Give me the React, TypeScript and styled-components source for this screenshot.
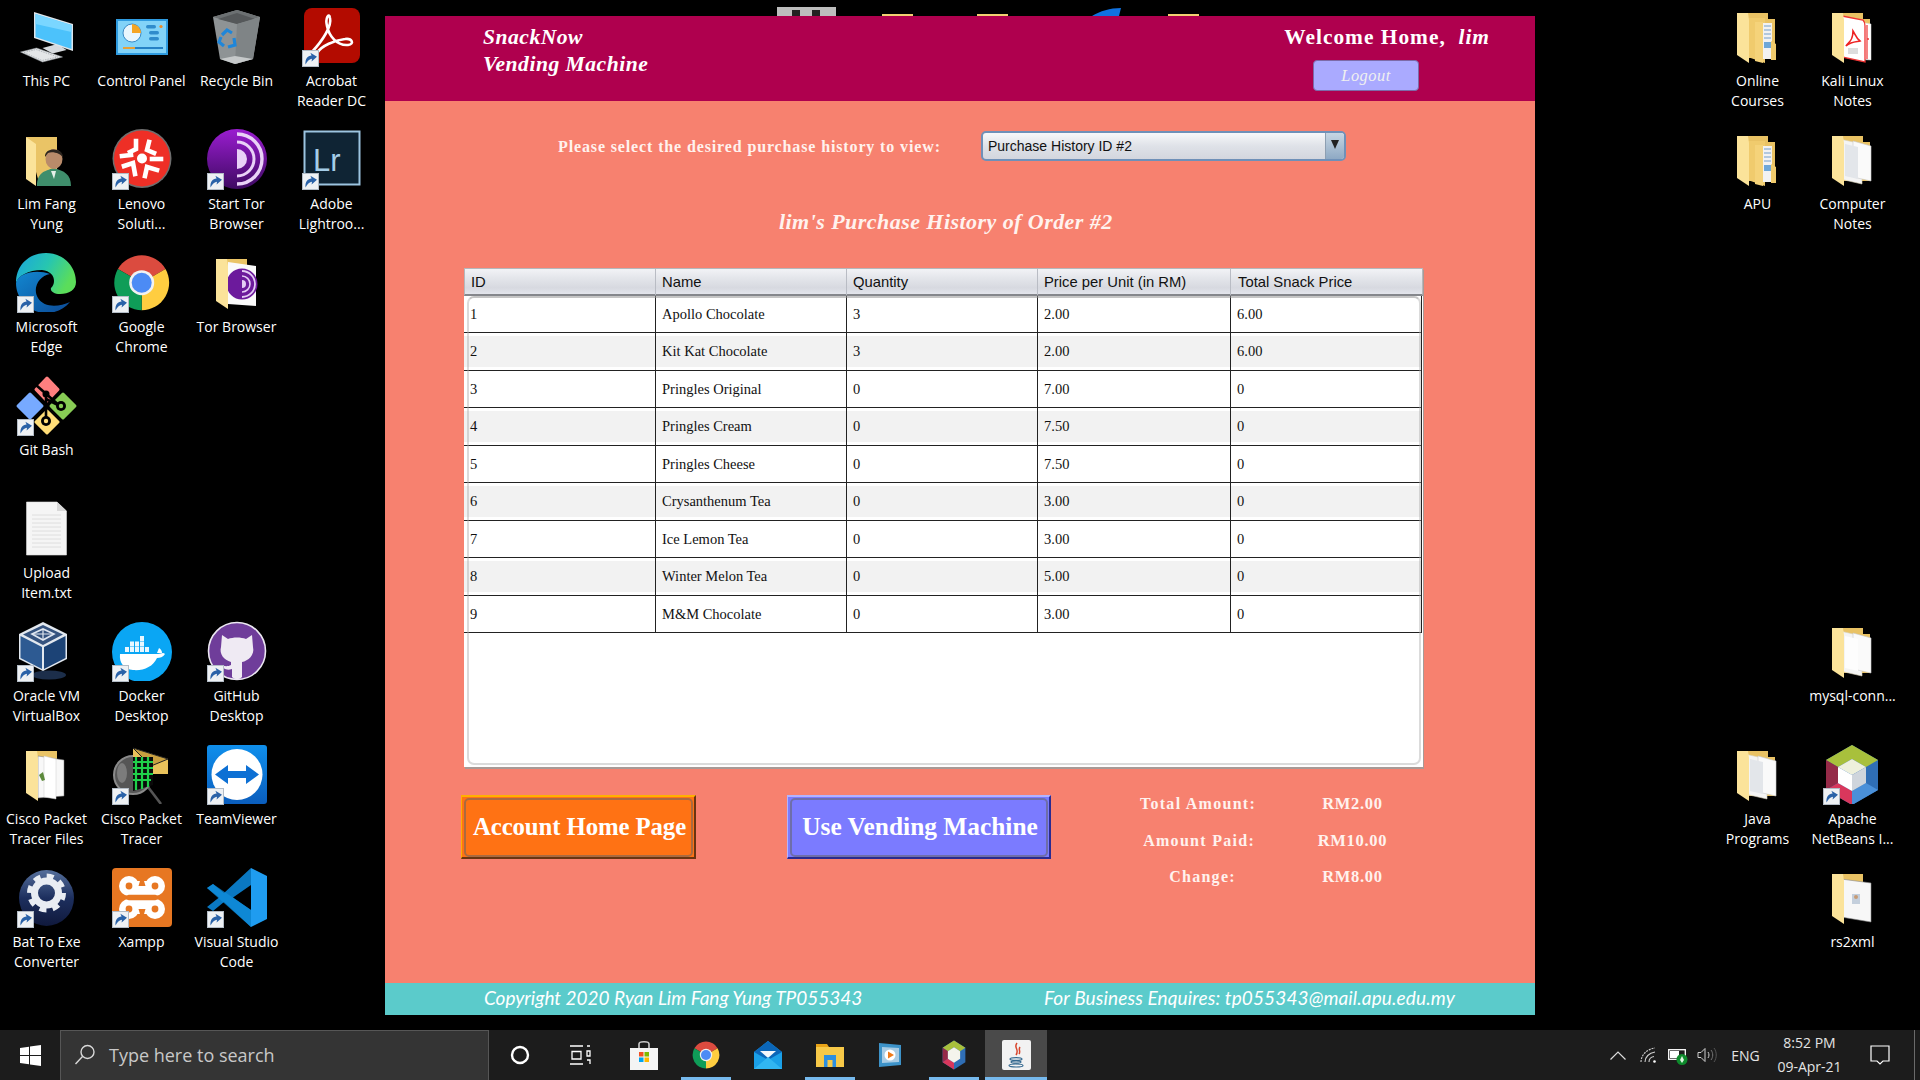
import React from "react";
import styled, { createGlobalStyle } from "styled-components";

const GlobalStyle = createGlobalStyle`
  html, body { margin: 0; padding: 0; background: #000; overflow: hidden; }
  #root { width: 1920px; height: 1080px; }
`;

const SERIF = `"Liberation Serif", serif`;
const ARIAL = `"Liberation Sans", sans-serif`;
const UI = `"Open Sans", sans-serif`;

const Screen = styled.div`
  width: 1920px; height: 1080px; display: flex; flex-direction: column; background: #000;
`;
const Desktop = styled.div`
  position: relative; height: 1030px; display: flex; align-items: flex-start;
`;
const IconGrid = styled.div<{ $cols: number; $pad: number; $w: number; $shift?: number }>`
  width: ${p => p.$w}px; flex: none; box-sizing: border-box; padding-left: ${p => p.$pad}px;
  margin-left: ${p => p.$shift ?? 0}px;
  display: grid; grid-template-columns: repeat(${p => p.$cols}, 95px); grid-template-rows: repeat(8, 123px);
`;
const IconCell = styled.div<{ $col: number; $row: number }>`
  grid-column: ${p => p.$col}; grid-row: ${p => p.$row};
  display: flex; flex-direction: column; align-items: center; padding-top: 6px;
`;
const IconArt = styled.div`
  position: relative; width: 64px; height: 60px; margin-right: 2px; svg { display: block; }
`;
const ShortcutBadge = styled.div`
  position: absolute; left: 3px; top: 44px; width: 17px; height: 17px;
  svg { display: block; }
`;
const IconLabel = styled.div`
  margin-top: 4.5px; width: 95px; text-align: center; white-space: pre-line;
  font: 14px/20px ${UI}; color: #fff;
`;
const Peek = styled.div<{ $x: number; $y: number; $w: number; $c: string }>`
  position: absolute; left: ${p => p.$x}px; top: ${p => p.$y}px; width: ${p => p.$w}px; height: ${p => 16 - p.$y}px;
  background: ${p => p.$c};
`;
const PeekArt = styled.svg`
  position: absolute; left: 1092px; top: 8px;
`;

const Win = styled.div`
  position: relative; margin: 16px 0 0 1px; width: 1150px; height: 999px; flex: none; display: flex; flex-direction: column;
  background: #f7816f;
`;
const WinHeader = styled.header`
  height: 85px; flex: none; background: #af004e; display: flex; justify-content: space-between; color: #fff;
`;
const Brand = styled.div`
  padding: 8px 0 0 98px; font: italic bold 21.6px/26.5px ${SERIF}; letter-spacing: .5px;
`;
const Account = styled.div`
  display: flex; flex-direction: column; align-items: flex-end; padding: 8px 45px 0 0;
`;
const Welcome = styled.div`
  font: bold 21.4px/26px ${SERIF}; letter-spacing: 1px; white-space: pre;
  em { font-style: italic; }
`;
const Logout = styled.div`
  margin: 10px 71px 0 0; width: 106px; height: 31px; box-sizing: border-box; border-radius: 4px;
  background: #aaaaff; border: 1px solid #7d6aa8; display: flex; align-items: center; justify-content: center;
  font: italic 16.4px ${SERIF}; color: #f0f0f0; letter-spacing: .5px;
`;
const WinBody = styled.main`
  flex: 1; display: flex; flex-direction: column; align-items: flex-start; padding-top: 30px;
`;
const SelectRow = styled.div`
  display: flex; align-items: center; padding-left: 173px;
`;
const SelectLabel = styled.div`
  width: 423px; padding-top: 2px; font: bold 16px ${SERIF}; color: #fff2ee; letter-spacing: .87px; white-space: nowrap;
`;
const Combo = styled.div`
  width: 365px; height: 30px; box-sizing: border-box; border: 2px solid #6f90b8; border-radius: 5px;
  display: flex; overflow: hidden; background: linear-gradient(#f7f8fa, #dfe2e8 50%, #d3d6de);
  font: 14px ${ARIAL}; color: #111;
`;
const ComboText = styled.div`
  flex: 1; line-height: 26px; padding-left: 5px;
`;
const ComboArrow = styled.div`
  width: 19px; border-left: 1px solid #8d9fb2; background: linear-gradient(#c7d6e3, #a5bbd0 60%, #8ea9c4);
  display: flex; align-items: center; justify-content: center; padding-bottom: 4px; box-sizing: border-box;
  &::before { content: ""; border-left: 4px solid transparent; border-right: 4px solid transparent; border-top: 9px solid #222; }
`;
const Title = styled.h1`
  margin: 46px 0 0 394px; font: italic bold 22px/30px ${SERIF}; color: #fff2ee; letter-spacing: .45px;
`;
const Table = styled.div`
  position: relative; margin: 31px 0 0 79px; width: 959px; height: 499px; background: #fff;
  box-shadow: 1px 2px 0 #a89a96; border-top: 1px solid #b5b7bb; box-sizing: border-box;
`;
const HeadRow = styled.div`
  display: grid; grid-template-columns: 190px 191px 191px 193px 192px; height: 26.5px; box-sizing: border-box;
  background: linear-gradient(#f2f3f6, #e4e6eb 35%, #d7d9e0 75%, #e3e5ec);
  border-bottom: 2px solid #85878c; border-left: 1px solid #b5b7bb; border-right: 1px solid #b5b7bb;
`;
const HeadCell = styled.div`
  font: 14.8px/26px ${ARIAL}; color: #111; padding-left: 6px; white-space: nowrap;
  & + & { border-left: 1px solid #b9bcc4; }
  &:last-child { padding-left: 7px; }
`;
const DataRow = styled.div<{ $alt: boolean }>`
  display: grid; grid-template-columns: 191px 191px 191px 193px 192px; height: 37.5px; box-sizing: border-box;
  border-bottom: 1px solid #222; width: 958px;
  background: ${p => p.$alt ? "linear-gradient(#fff 3px, #f2f2f2 3px, #f2f2f2 calc(100% - 3px), #fff calc(100% - 3px))" : "#fff"};
`;
const DataCell = styled.div`
  font: 14.5px/37px ${SERIF}; color: #111; padding-left: 6px; white-space: nowrap;
  & + & { border-left: 1px solid #222; }
  &:last-child { border-right: 1px solid #222; }
`;
const PanelEdge = styled.div`
  position: absolute; left: 3px; right: 2px; top: 27px; bottom: 2px; border: 2px solid rgba(170,170,170,.42);
  border-top-color: rgba(150,150,150,.55); border-radius: 7px; pointer-events: none;
`;
const BottomRow = styled.div`
  display: flex; align-items: flex-start; margin: 19px 0 0 76px;
`;
const BigButton = styled.div<{ $bg: string; $lt: string; $dk: string; $w: number; $gap: number; $size: number; $ls: number }>`
  position: relative; margin: 9px ${p => p.$gap}px 0 0; width: ${p => p.$w}px; height: 64px; box-sizing: border-box;
  background: ${p => p.$bg}; color: #fff; padding: 0 0 1px 3px;
  border-style: solid; border-width: 2px 2px 2px 1px;
  border-color: ${p => p.$lt} ${p => p.$dk} ${p => p.$dk} ${p => p.$lt};
  display: flex; align-items: center; justify-content: center;
  font: bold ${p => p.$size}px ${SERIF}; letter-spacing: ${p => p.$ls}px; white-space: nowrap;
  &::after {
    content: ""; position: absolute; inset: 1px 1px 0 2px; border: 2px solid rgba(100,100,100,.55); border-radius: 5px;
  }
`;
const Stats = styled.div`
  display: grid; grid-template-columns: 115px 66px 92px; grid-auto-rows: 36.5px; align-items: center;
`;
const StatLabel = styled.div<{ $center?: boolean }>`
  grid-column: 1; text-align: ${p => p.$center ? "center" : "right"}; font: bold 16px ${SERIF}; color: #fff2ee;
  letter-spacing: 1.28px; white-space: nowrap; ${p => p.$center ? "padding-left: 10px;" : ""}
`;
const StatValue = styled.div`
  grid-column: 3; text-align: center; font: bold 16.5px ${SERIF}; color: #fff2ee; letter-spacing: .7px; margin-left: -29px;
`;
const WinFooter = styled.footer`
  height: 32px; flex: none; box-sizing: border-box; padding-bottom: 3px; background: #5bcbcb; display: flex; align-items: center;
  font: italic 19px "Lato", sans-serif; color: #fff;
`;
const FootLeft = styled.div` width: 659px; padding-left: 99px; box-sizing: border-box; `;
const FootRight = styled.div` letter-spacing: .13px; `;

const Taskbar = styled.div`
  height: 50px; flex: none; background: #1c1c1c; display: flex; align-items: stretch;
`;
const StartBtn = styled.div`
  width: 60px; flex: none; display: flex; align-items: center; justify-content: center;
`;
const SearchBox = styled.div`
  width: 429px; flex: none; box-sizing: border-box; background: #343434; border: 1px solid #565656; border-bottom: none;
  display: flex; align-items: center; gap: 13px; padding: 0 0 2px 13px;
  font: 18px ${UI}; color: #c8c8c8;
`;
const TaskSlot = styled.div<{ $on?: boolean; $active?: boolean; $nudge?: boolean }>`
  position: relative; width: 62px; flex: none; display: flex; align-items: center; justify-content: center;
  box-sizing: border-box; padding-right: ${p => p.$nudge ? 4 : 0}px;
  background: ${p => p.$active ? "#4a4a4a" : "transparent"};
  &::after {
    content: ""; display: ${p => p.$on || p.$active ? "block" : "none"}; position: absolute; bottom: 0; height: 3px; background: #76b9ed;
    left: ${p => p.$active ? 0 : 6}px; right: ${p => p.$active ? 0 : 6}px;
  }
`;
const Tray = styled.div`
  margin-left: auto; display: flex; align-items: stretch;
`;
const TrayItem = styled.div<{ $w: number; $pad?: number }>`
  width: ${p => p.$w}px; box-sizing: border-box; padding-left: ${p => p.$pad ?? 0}px;
  display: flex; align-items: center; justify-content: center; color: #e4e4e4; font: 14px ${UI};
`;
const Clock = styled.div`
  text-align: center; font: 14px/24px ${UI}; color: #e4e4e4;
`;
const ShowDesktop = styled.div`
  margin-left: 6px; width: 5px; border-left: 1px solid #6a6a6a;
`;

/* ---------- drawn icons ---------- */
const S: React.FC<{ children: React.ReactNode }> = ({ children }) => (
  <svg width={64} height={60} viewBox="0 0 64 60" xmlns="http://www.w3.org/2000/svg">{children}</svg>
);

const Shortcut = () => (
  <svg width="17" height="17" viewBox="0 0 17 17">
    <rect x=".5" y=".5" width="16" height="16" fill="#eef1f4" stroke="#b3bcc6" />
    <path d="M3.5 14.5 C3 9 5.5 6 9.6 5.6 L8.4 2.8 L15 6.8 L9.6 11.6 L10 8.8 C7.6 9 5.6 10.6 3.5 14.5 Z" fill="#2a62a8" />
  </svg>
);

const FolderBase: React.FC<{ children?: React.ReactNode }> = ({ children }) => (
  <S>
    <path d="M12 7 H43 V13 H50 V52 H24 Z" fill="#e9c264" />
    {children}
    <path d="M12 7 L23 7 L24 14 L24 57 L12 49 Z" fill="#fbe39a" />
  </S>
);
const Papers = ({ lines = "#e3e6ea" }: { lines?: string }) => (
  <>
    <path d="M20 10 L42 15 V55 L20 50 Z" fill="#f4f4f4" stroke="#d9d2b8" strokeWidth=".6" />
    <path d="M33 12 L51 17 V52 L33 48 Z" fill="#fafafa" stroke="#c9c9c9" strokeWidth=".6" />
    <path d="M25 15 L38 18 V50 L25 47 Z" fill={lines} />
  </>
);
const YellowStack = () => (
  <>
    <path d="M20 12 L40 12 L40 57 L20 50 Z" fill="#f0cb6d" />
    <path d="M38 17 L47 17 V53 L38 53 Z" fill="#f2f2f2" />
    <path d="M39 20 H46 M39 24 H46 M39 28 H46 M39 32 H46" stroke="#9dbbd8" strokeWidth="1.4" />
    <path d="M39 36 H46 V42 H39 Z" fill="#6ea7d8" />
    <path d="M30 16 L38 16 L38 57 L30 55 Z" fill="#f5d37a" />
    <path d="M46 35 L51 38 V54 L46 54 Z" fill="#f0cb6d" />
  </>
);
const PDFFolder = () => (
  <FolderBase>
    <path d="M33 15 L51 18 V54 L33 53 Z" fill="#fff" stroke="#ddd" strokeWidth=".5" />
    <path d="M22 10 L43 14 Q45 16 45 20 V56 L22 51 Z" fill="#fff" stroke="#e33" strokeWidth="1.3" />
    <path d="M47 19 V53" stroke="#e33" strokeWidth="1.2" />
    <circle cx="48" cy="33" r="1" fill="#e33" />
    <path d="M33 25 C33 36 28 36 26 40 C32 35 38 36 40 35 C36 32 35 28 33 25 Z" fill="none" stroke="#e22" strokeWidth="1.6" />
    <rect x="28" y="42" width="10" height="6" fill="#ddd" />
  </FolderBase>
);

const icons: Record<string, React.ReactNode> = {
  pc: (
    <S>
      <path d="M28.5 42 L43.5 38 L52.5 44 L38.5 47.5 Z" fill="#d6dade" />
      <path d="M6.5 46 L22.5 42 L48.5 51 L28.5 56 Z" fill="#e4e6e8" stroke="#9aa0a6" strokeWidth=".5" />
      <path d="M10 46.5 L22 43.5 L44 51 L28 54.5 Z" fill="none" stroke="#a6abb1" strokeWidth=".8" strokeDasharray="1.5 1" />
      <path d="M20 6 L59 18 V45 L20 32 Z" fill="#dfe5ea" />
      <path d="M21.5 8 L57.5 19 V43 L21.5 31 Z" fill="#4cc2fb" />
      <path d="M21.5 8 L57.5 19 V26 L21.5 18 Z" fill="#7ad6ff" />
    </S>
  ),
  panel: (
    <S>
      <rect x="7" y="13" width="52" height="36" fill="#2f9be0" />
      <rect x="9" y="15" width="48" height="32" fill="#82d3f8" />
      <circle cx="23" cy="27" r="9" fill="#e9f6fd" stroke="#1f74b5" strokeWidth=".8" />
      <path d="M23 27 V18 A9 9 0 0 1 32 27 Z" fill="#f5a524" />
      <rect x="37" y="19" width="10" height="3.5" rx="1.7" fill="#2f8ccc" />
      <rect x="40" y="25" width="10" height="3.5" rx="1.7" fill="#2f8ccc" />
      <rect x="40" y="31" width="10" height="3.5" rx="1.7" fill="#2f8ccc" />
      <circle cx="52" cy="20.5" r="1.6" fill="#f08b24" />
      <path d="M14 42 H26" stroke="#f39b22" strokeWidth="1.8" />
      <path d="M26 42 H54" stroke="#1b78bf" strokeWidth="1.8" />
    </S>
  ),
  bin: (
    <S>
      <path d="M9 11 L33 4 L56 11 L49 53 L31 58 L16 53 Z" fill="#8e9395" />
      <path d="M9 11 L33 4 L56 11 L33 18 Z" fill="#6c7072" />
      <path d="M14 13 L33 7 L51 13 L33 18 Z" fill="#55585a" />
      <path d="M33 18 L56 11 L49 53 L31 58 Z" fill="#7f8486" />
      <path d="M16 53 L31 58 L49 53 L31 50 Z" fill="#c6c9ca" />
      <g fill="none" stroke="#1f86d9" strokeWidth="3.2">
        <path d="M18 29 L23 24 L28 27" />
        <path d="M30 32 L31 39 L24 41" />
        <path d="M20 40 L15 36 L17 31" />
      </g>
    </S>
  ),
  acrobat: (
    <S>
      <rect x="5" y="2" width="56" height="55" rx="8" fill="#b30b00" />
      <path d="M13 46 C24 34 33 20 31 12 C30 6 26 12 28 20 C30 30 38 40 49 39 C56 38 53 32 46 33 C36 34 22 40 18 47 C16 50 13 49 13 46 Z" fill="none" stroke="#fff" strokeWidth="2.6" />
    </S>
  ),
  lim: (
    <S>
      <path d="M12 8 L43 8 V50 L24 50 Z" fill="#eac466" />
      <path d="M12 8 L22 15 V57 L12 50 Z" fill="#fbe39a" />
      <path d="M23 57 C23 44 30 42 40 39 C50 42 57 45 57 57 Z" fill="#3f8e6c" />
      <path d="M37 42 L42 42 L40 50 Z" fill="#e6f0ea" />
      <ellipse cx="40" cy="30" rx="8.5" ry="10" fill="#b98b6a" />
      <path d="M31 28 C30 18 50 18 49 29 C47 24 38 22 34 24 C33 25 32 27 31 28 Z" fill="#2b241e" />
    </S>
  ),
  lenovo: (
    <S>
      <circle cx="33" cy="29.5" r="29.5" fill="#6e6e6e" />
      <circle cx="33" cy="29.5" r="28" fill="#ee2f26" />
      <circle cx="33" cy="29.5" r="5" fill="#fff" />
      <g stroke="#fff" strokeWidth="4.6" fill="none" strokeLinecap="square">
        <path d="M27 12 L27 20 L21 23" />
        <path d="M40 13 L38 21 L45 24" />
        <path d="M13 27 L22 26" />
        <path d="M15 37 L24 34 L26 45" />
        <path d="M36 47 L38 38 L48 41" />
        <path d="M43 30 L52 30" />
      </g>
    </S>
  ),
  tor: (
    <S>
      <defs>
        <linearGradient id="torg" x1="0" y1="0" x2="0" y2="1"><stop offset="0" stopColor="#9a1dd0" /><stop offset="1" stopColor="#3e0a62" /></linearGradient>
      </defs>
      <circle cx="33" cy="30" r="30" fill="url(#torg)" />
      <g fill="none" stroke="#e9d2f7">
        <path d="M33 5 A25 25 0 0 1 33 55" strokeWidth="3.4" />
        <path d="M33 13 A17 17 0 0 1 33 47" strokeWidth="3" />
      </g>
      <path d="M33 20 A10 10 0 0 1 33 40 Z" fill="#e9d2f7" />
    </S>
  ),
  lr: (
    <S>
      <rect x="5.5" y="2.5" width="55" height="53" fill="#0f2434" stroke="#9cc4e0" strokeWidth="2" />
      <text x="14" y="42" fontFamily="Liberation Sans, sans-serif" fontSize="31" fill="#a4cde8">Lr</text>
    </S>
  ),
  edge: (
    <S>
      <defs>
        <linearGradient id="ega" x1="0" y1="0" x2="1" y2=".4"><stop offset="0" stopColor="#1aa4e0" /><stop offset=".55" stopColor="#27c6b0" /><stop offset="1" stopColor="#5bdd5a" /></linearGradient>
        <linearGradient id="egb" x1="0" y1="0" x2="1" y2="1"><stop offset="0" stopColor="#1287d0" /><stop offset="1" stopColor="#0c4a96" /></linearGradient>
      </defs>
      <path d="M2 31 C2 13 15 1 32 1 C50 1 62 15 62 30 C62 38 55 42 46 42 C40 42 36 39 37 36 C43 30 40 19 28 18 C14 18 4 24 2 31 Z" fill="url(#ega)" />
      <path d="M2 31 C2 48 16 61 32 61 C42 61 50 57 56 50 C45 55 30 56 24 46 C18 36 25 24 36 22 C22 17 4 21 2 31 Z" fill="url(#egb)" />
    </S>
  ),
  chrome: (
    <S>
      <path d="M32.7 30.7 L8.9 17 A27.5 27.5 0 0 1 56.5 17 Z" fill="#db4b3f" />
      <path d="M32.7 30.7 L56.5 17 A27.5 27.5 0 0 1 32.7 58.2 Z" fill="#ffcd40" />
      <path d="M32.7 30.7 L32.7 58.2 A27.5 27.5 0 0 1 8.9 17 Z" fill="#0f9d58" />
      <circle cx="32.7" cy="30.7" r="12.5" fill="#f2f2f2" />
      <circle cx="32.7" cy="30.7" r="10" fill="#4c8bf5" />
    </S>
  ),
  torfolder: (
    <S>
      <path d="M12 7 H43 V52 H24 Z" fill="#eac466" />
      <path d="M24 10 L52 14 V54 L24 52 Z" fill="#fafafa" />
      <circle cx="38" cy="32" r="15.5" fill="#6c1a9c" />
      <g fill="none" stroke="#e4cdf5"><path d="M38 19 A13 13 0 0 1 38 45" strokeWidth="1.8" /><path d="M38 24 A8 8 0 0 1 38 40" strokeWidth="1.6" /></g>
      <path d="M38 28 A4 4 0 0 1 38 36 Z" fill="#e4cdf5" />
      <path d="M12 7 L23 7 L24 14 V57 L12 49 Z" fill="#fbe39a" />
    </S>
  ),
  git: (
    <S>
      <g strokeWidth="3" strokeLinejoin="round">
        <path d="M33 3 L44 14.5 L33 26 L22 14.5 Z" fill="#ff7f7f" stroke="#ff7f7f" />
        <path d="M16 19 L28 31 L16 43 L4 31 Z" fill="#77aaff" stroke="#77aaff" />
        <path d="M49 19 L61 31 L49 43 L37 31 Z" fill="#88cc55" stroke="#88cc55" />
        <path d="M33 36 L44 47 L33 58 L22 47 Z" fill="#ffdd77" stroke="#ffdd77" />
      </g>
      <g stroke="#000" strokeWidth="2.6" fill="none">
        <path d="M22 10 L47 32" />
        <path d="M32 16 V46" />
        <path d="M32 24 L46 31" />
      </g>
      <circle cx="32" cy="19" r="3.5" fill="#000" />
      <circle cx="32" cy="46" r="5" fill="#000" /><circle cx="32" cy="46" r="2.2" fill="#ffdd77" />
      <circle cx="47" cy="31" r="5" fill="#000" /><circle cx="47" cy="31" r="2.2" fill="#88cc55" />
    </S>
  ),
  txt: (
    <S>
      <path d="M12.5 4 H43 L52.5 13 V57 H12.5 Z" fill="#f5f5f5" stroke="#dcdcdc" strokeWidth=".6" />
      <path d="M43 4 V13 H52.5 Z" fill="#d8d8d8" />
      <path d="M18 17 H47 M18 21 H47 M18 25 H47 M18 29 H47 M18 33 H47 M18 37 H47 M18 41 H47 M18 45 H47 M18 49 H47" stroke="#dedede" strokeWidth="1" />
    </S>
  ),
  vbox: (
    <S>
      <ellipse cx="35" cy="54" rx="17" ry="4.5" fill="#1c2e4a" />
      <path d="M29 1 L53 13 L53 38 L29 50 L5 38 L5 13 Z" fill="#e2e8ef" />
      <path d="M6.5 15 L28 26 V48 L6.5 37 Z" fill="#2d5a92" />
      <path d="M30 26 L51.5 15 V37 L30 48 Z" fill="#1c4376" />
      <path d="M29 4 L49 13.5 L29 24 L9 13.5 Z" fill="#35537f" />
      <path d="M18 13 L29 8 L40 13 L29 19 Z" fill="none" stroke="#dfe6f0" strokeWidth="1.6" />
      <path d="M29 8 V19 M18 13 L40 13" stroke="#dfe6f0" strokeWidth="1.2" />
    </S>
  ),
  docker: (
    <S>
      <ellipse cx="33" cy="31" rx="30" ry="30" fill="#0aa6f4" />
      <path d="M11 33 H49 C52 33 54 31 56 33 C54 36 51 37 48 37 C44 46 34 50 24 49 C15 48 10 42 11 33 Z" fill="#fff" />
      <path d="M50 27 C52 28 53 30 53 32 L48 32 Z" fill="#fff" />
      <g fill="#e9f7ff">
        <rect x="16" y="26" width="4" height="5" /><rect x="21" y="26" width="4" height="5" /><rect x="26" y="26" width="4" height="5" /><rect x="31" y="26" width="4" height="5" /><rect x="36" y="26" width="4" height="5" />
        <rect x="21" y="20.5" width="4" height="5" /><rect x="26" y="20.5" width="4" height="5" /><rect x="31" y="20.5" width="4" height="5" />
        <rect x="31" y="15" width="4" height="5" />
      </g>
    </S>
  ),
  github: (
    <S>
      <circle cx="33" cy="30" r="28.5" fill="#6f3d9a" stroke="#ece8f2" strokeWidth="1.6" />
      <path d="M18 14 L24 18 C29 16 37 16 42 18 L48 14 L49 26 C51 34 44 40 38 41 L38 56 C35 59 31 59 28 56 L28 48 C22 50 19 47 16 44 C20 45 23 46 27 44 L27 41 C20 39 15 33 17 26 Z" fill="#efeaf3" />
    </S>
  ),
  ciscofolder: (
    <S>
      <path d="M12 7 H43 V52 H24 Z" fill="#eac466" />
      <path d="M24 12 L50 16 V52 L24 54 Z" fill="#f8f8f8" stroke="#777" strokeWidth=".5" />
      <path d="M30 12 L42 15 V55 L30 53 Z" fill="#fff" stroke="#ccc" strokeWidth=".5" />
      <path d="M12 7 L23 7 L24 14 V57 L12 49 Z" fill="#fbe39a" />
      <path d="M25 31 L29 28 L31 36 L28 37 Z" fill="#5d8a3d" />
    </S>
  ),
  cisco: (
    <S>
      <path d="M39 43 L52 60" stroke="#555" strokeWidth="2.6" />
      <circle cx="24" cy="31" r="19" fill="#565656" stroke="#8a8a8a" strokeWidth="2" />
      <ellipse cx="13" cy="29" rx="5" ry="10" fill="#7c7c7c" />
      <path d="M24 4 L59 15 V30 L24 30 Z" fill="#e9c25b" />
      <path d="M24 4 L59 15 L42 22 Z" fill="#c9a040" stroke="#222" strokeWidth="1" />
      <path d="M24 13 H44 V41 L24 47 Z" fill="#0a0a0a" />
      <g stroke="#1fd04a" strokeWidth="2.2"><path d="M24 18 H44 M24 24 H44 M24 30 H44 M24 36 H42" /><path d="M27 13 V46 M33 13 V45 M39 13 V43" /></g>
    </S>
  ),
  teamviewer: (
    <S>
      <defs><linearGradient id="tvg" x1="0" y1="0" x2="0" y2="1"><stop offset="0" stopColor="#0f8fec" /><stop offset="1" stopColor="#0a5dbd" /></linearGradient></defs>
      <rect x="3" y="1" width="60" height="59" rx="3" fill="url(#tvg)" />
      <circle cx="33" cy="30.5" r="25.5" fill="#fff" />
      <path d="M11 30.5 L24 21 V27 H42 V21 L55 30.5 L42 40 V34 H24 V40 Z" fill="#0d70d4" />
    </S>
  ),
  bat: (
    <S>
      <defs><linearGradient id="btg" x1="0" y1="0" x2="0" y2="1"><stop offset="0" stopColor="#56709c" /><stop offset=".5" stopColor="#1d2f5e" /><stop offset="1" stopColor="#10193c" /></linearGradient></defs>
      <ellipse cx="32.5" cy="31" rx="27.5" ry="28" fill="url(#btg)" />
      <circle cx="32.5" cy="26" r="12" fill="none" stroke="#e9edf3" strokeWidth="7" />
      <circle cx="32.5" cy="26" r="17" fill="none" stroke="#e9edf3" strokeWidth="5" strokeDasharray="7 6.3" />
    </S>
  ),
  xampp: (
    <S>
      <rect x="3" y="1" width="60" height="59" rx="4" fill="#e77722" />
      <g fill="#fff">
        <circle cx="20" cy="19" r="10" /><circle cx="46" cy="19" r="10" />
        <circle cx="20" cy="42" r="10" /><circle cx="46" cy="42" r="10" />
        <rect x="18" y="14" width="30" height="33" />
      </g>
      <path d="M33 7 L29.5 19 H36.5 Z M33 54 L29.5 42 H36.5 Z" fill="#e77722" />
      <circle cx="20" cy="19" r="3.4" fill="#e77722" /><circle cx="46" cy="19" r="3.4" fill="#e77722" />
      <circle cx="20" cy="42" r="3.4" fill="#e77722" /><circle cx="46" cy="42" r="3.4" fill="#e77722" />
      <path d="M20 30.5 H46" stroke="#e77722" strokeWidth="5.5" strokeLinecap="round" />
    </S>
  ),
  vscode: (
    <S>
      <path d="M47 1 L20 26 L9 17 L3 21 L15 30.5 L3 40 L9 44 L20 35 L47 60 L47 43 L29 30.5 L47 18 Z" fill="#0a78c2" />
      <path d="M3 21 L9 17 L47 43 L47 60 Z" fill="#0f8fdd" opacity=".7" />
      <path d="M47 1 L63 9 V52 L47 60 Z" fill="#1f9cf0" />
    </S>
  ),
  netbeans: (
    <S>
      <path d="M32 1 L58 16 V46 L32 61 L6 46 V16 Z" fill="#2f6eb5" />
      <path d="M32 1 L58 16 L46 23 L32 15 L18 23 L6 16 Z" fill="#a8c03c" />
      <path d="M6 16 L18 23 V39 L6 46 Z" fill="#952a48" />
      <path d="M6 46 L18 39 L32 47 V61 Z" fill="#d9375c" />
      <path d="M32 47 L46 39 L58 46 L32 61 Z" fill="#4a90d9" />
      <path d="M32 15 L46 23 L32 31 L18 23 Z" fill="#eef0dc" />
      <path d="M18 23 L32 31 V47 L18 39 Z" fill="#fff" />
      <path d="M46 23 L32 31 V47 L46 39 Z" fill="#cfd5dc" />
    </S>
  ),
  online: <FolderBase><YellowStack /></FolderBase>,
  apu: <FolderBase><YellowStack /></FolderBase>,
  kali: <PDFFolder />,
  notes: <FolderBase><Papers /></FolderBase>,
  mysql: <FolderBase><Papers lines="#fdfdfd" /></FolderBase>,
  java: <FolderBase><Papers /></FolderBase>,
  rs2: (
    <S>
      <path d="M12 7 H43 V50 H24 Z" fill="#e9c264" />
      <path d="M21 12 L51 16 V55 L21 50 Z" fill="#f7f7f7" stroke="#888" strokeWidth=".6" />
      <path d="M12 7 L23 7 L24 14 V57 L12 49 Z" fill="#fbe39a" />
      <rect x="32" y="27" width="8" height="10" fill="#c4cfdc" />
      <circle cx="36" cy="30" r="2" fill="#c79b74" />
    </S>
  ),
};

type Item = [number, number, string, string, boolean?];
const leftItems: Item[] = [
  [1, 1, "This PC", "pc"], [2, 1, "Control Panel", "panel"], [3, 1, "Recycle Bin", "bin"], [4, 1, "Acrobat\nReader DC", "acrobat", true],
  [1, 2, "Lim Fang\nYung", "lim"], [2, 2, "Lenovo\nSoluti...", "lenovo", true], [3, 2, "Start Tor\nBrowser", "tor", true], [4, 2, "Adobe\nLightroo...", "lr", true],
  [1, 3, "Microsoft\nEdge", "edge", true], [2, 3, "Google\nChrome", "chrome", true], [3, 3, "Tor Browser", "torfolder"],
  [1, 4, "Git Bash", "git", true],
  [1, 5, "Upload\nItem.txt", "txt"],
  [1, 6, "Oracle VM\nVirtualBox", "vbox", true], [2, 6, "Docker\nDesktop", "docker", true], [3, 6, "GitHub\nDesktop", "github", true],
  [1, 7, "Cisco Packet\nTracer Files", "ciscofolder"], [2, 7, "Cisco Packet\nTracer", "cisco", true], [3, 7, "TeamViewer", "teamviewer", true],
  [1, 8, "Bat To Exe\nConverter", "bat", true], [2, 8, "Xampp", "xampp", true], [3, 8, "Visual Studio\nCode", "vscode", true],
];
const rightItems: Item[] = [
  [1, 1, "Online\nCourses", "online"], [2, 1, "Kali Linux\nNotes", "kali"],
  [1, 2, "APU", "apu"], [2, 2, "Computer\nNotes", "notes"],
  [2, 6, "mysql-conn...", "mysql"],
  [1, 7, "Java\nPrograms", "java"], [2, 7, "Apache\nNetBeans I...", "netbeans", true],
  [2, 8, "rs2xml", "rs2"],
];

const DeskIcon: React.FC<{ item: Item }> = ({ item: [col, row, label, icon, sc] }) => (
  <IconCell $col={col} $row={row}>
    <IconArt>
      {icons[icon]}
      {sc && <ShortcutBadge><Shortcut /></ShortcutBadge>}
    </IconArt>
    <IconLabel>{label}</IconLabel>
  </IconCell>
);

const purchases = [
  ["1", "Apollo Chocolate", "3", "2.00", "6.00"],
  ["2", "Kit Kat Chocolate", "3", "2.00", "6.00"],
  ["3", "Pringles Original", "0", "7.00", "0"],
  ["4", "Pringles Cream", "0", "7.50", "0"],
  ["5", "Pringles Cheese", "0", "7.50", "0"],
  ["6", "Crysanthenum Tea", "0", "3.00", "0"],
  ["7", "Ice Lemon Tea", "0", "3.00", "0"],
  ["8", "Winter Melon Tea", "0", "5.00", "0"],
  ["9", "M&M Chocolate", "0", "3.00", "0"],
];
const headers = ["ID", "Name", "Quantity", "Price per Unit (in RM)", "Total Snack Price"];

const T: React.FC<{ children: React.ReactNode; s?: number }> = ({ children, s = 30 }) => (
  <svg width={s} height={s} viewBox="0 0 30 30">{children}</svg>
);

export default function App() {
  return (
    <Screen>
      <GlobalStyle />
      <Desktop>
        <Peek $x={777} $y={7} $w={59} $c="#bdbdbd" />
        <Peek $x={792} $y={10} $w={8} $c="#222" />
        <Peek $x={812} $y={10} $w={8} $c="#222" />
        <Peek $x={882} $y={14} $w={31} $c="#f2cf72" />
        <Peek $x={977} $y={14} $w={31} $c="#f2cf72" />
        <Peek $x={1168} $y={14} $w={31} $c="#f2cf72" />
        <PeekArt width="30" height="8" viewBox="0 0 30 8">
          <path d="M0 8 C8 3 18 0 29 0 L27 8 Z" fill="#1172e0" />
        </PeekArt>
        <IconGrid $cols={4} $pad={0} $w={385} $shift={-1}>
          {leftItems.map(i => <DeskIcon key={i[2]} item={i} />)}
        </IconGrid>
        <Win>
          <WinHeader>
            <Brand>SnackNow<br />Vending Machine</Brand>
            <Account>
              <Welcome>Welcome Home,  <em>lim</em></Welcome>
              <Logout>Logout</Logout>
            </Account>
          </WinHeader>
          <WinBody>
            <SelectRow>
              <SelectLabel>Please select the desired purchase history to view:</SelectLabel>
              <Combo>
                <ComboText>Purchase History ID #2</ComboText>
                <ComboArrow />
              </Combo>
            </SelectRow>
            <Title>lim's Purchase History of Order #2</Title>
            <Table>
              <HeadRow>{headers.map(h => <HeadCell key={h}>{h}</HeadCell>)}</HeadRow>
              {purchases.map((r, i) => (
                <DataRow key={r[0]} $alt={i % 2 === 1}>
                  {r.map((c, j) => <DataCell key={j}>{c}</DataCell>)}
                </DataRow>
              ))}
              <PanelEdge />
            </Table>
            <BottomRow>
              <BigButton $bg="#ff7214" $lt="#ffb000" $dk="#6b3410" $w={235} $gap={91} $size={24.8} $ls={-.1}>Account Home Page</BigButton>
              <BigButton $bg="#7b7bff" $lt="#b3b3ff" $dk="#2a2a90" $w={264} $gap={89} $size={25.4} $ls={0}>Use Vending Machine</BigButton>
              <Stats>
                <StatLabel>Total Amount:</StatLabel><StatValue>RM2.00</StatValue>
                <StatLabel>Amount Paid:</StatLabel><StatValue>RM10.00</StatValue>
                <StatLabel $center>Change:</StatLabel><StatValue>RM8.00</StatValue>
              </Stats>
            </BottomRow>
          </WinBody>
          <WinFooter>
            <FootLeft>Copyright 2020 Ryan Lim Fang Yung TP055343</FootLeft>
            <FootRight>For Business Enquires: tp055343@mail.apu.edu.my</FootRight>
          </WinFooter>
        </Win>
        <IconGrid $cols={2} $pad={175} $w={385}>
          {rightItems.map(i => <DeskIcon key={i[2]} item={i} />)}
        </IconGrid>
      </Desktop>
      <Taskbar>
        <StartBtn>
          <svg width="21" height="21" viewBox="0 0 21 21"><path d="M0 3 L9 1.7 V10 H0 Z M10 1.5 L21 0 V10 H10 Z M0 11 H9 V19.3 L0 18 Z M10 11 H21 V21 L10 19.5 Z" fill="#fff" /></svg>
        </StartBtn>
        <SearchBox>
          <svg width="22" height="22" viewBox="0 0 22 22" fill="none" stroke="#d8d8d8" strokeWidth="1.4"><circle cx="13.5" cy="8" r="6.5" /><path d="M8.5 12.5 L1.5 20" /></svg>
          <span>Type here to search</span>
        </SearchBox>
        <TaskSlot><svg width="20" height="20" viewBox="0 0 20 20"><circle cx="10" cy="10" r="8" fill="none" stroke="#fff" strokeWidth="2.4" /></svg></TaskSlot>
        <TaskSlot $nudge><svg width="22" height="20" viewBox="0 0 22 20" fill="none" stroke="#fff" strokeWidth="1.3"><path d="M1 1 H14 M3 6.5 H12 V14 H3 Z M1 19 H14 M18 1 H21 M18 6 H21 V11 H18 Z M18 15 H21 V19" /></svg></TaskSlot>
        <TaskSlot>
          <T>
            <path d="M10 8 V4 C10 1 20 1 20 4 V8" fill="none" stroke="#ccc" strokeWidth="1.6" />
            <rect x="1" y="8" width="28" height="22" fill="#f4f4f4" />
            <rect x="10" y="12" width="4.5" height="4.5" fill="#f25022" /><rect x="15.5" y="12" width="4.5" height="4.5" fill="#7fba00" />
            <rect x="10" y="17.5" width="4.5" height="4.5" fill="#00a4ef" /><rect x="15.5" y="17.5" width="4.5" height="4.5" fill="#ffb900" />
          </T>
        </TaskSlot>
        <TaskSlot $on>
          <T>
            <path d="M15 15 L3.4 8.2 A13.5 13.5 0 0 1 26.6 8.2 Z" fill="#db4b3f" />
            <path d="M15 15 L26.6 8.2 A13.5 13.5 0 0 1 15 28.5 Z" fill="#ffcd40" />
            <path d="M15 15 V28.5 A13.5 13.5 0 0 1 3.4 8.2 Z" fill="#0f9d58" />
            <circle cx="15" cy="15" r="6.2" fill="#f0f0f0" /><circle cx="15" cy="15" r="5" fill="#4c8bf5" />
          </T>
        </TaskSlot>
        <TaskSlot>
          <T>
            <path d="M15 1 L29 12 V29 H1 V12 Z" fill="#1aa0e8" />
            <path d="M15 1 L29 12 L15 20 L1 12 Z" fill="#0b66b8" />
            <path d="M7 11 H23 L15 18 Z" fill="#f2f6fb" />
            <path d="M1 29 L15 17 L29 29 Z" fill="#31b6f2" />
          </T>
        </TaskSlot>
        <TaskSlot $on>
          <T>
            <path d="M1 4 H12 L14 7 H1 Z" fill="#e8a317" />
            <rect x="1" y="7" width="28" height="20" fill="#f7c948" />
            <rect x="9" y="15" width="12" height="12" fill="#2d8fe0" />
            <rect x="12.5" y="20" width="5" height="7" fill="#f7c948" />
          </T>
        </TaskSlot>
        <TaskSlot $nudge>
          <svg width="24" height="26" viewBox="0 0 24 26">
            <path d="M1 1 L23 3 V23 L1 25 Z" fill="#3d93c9" />
            <path d="M4 5 L21 6 V20 L4 21 Z" fill="#a9cce4" />
            <circle cx="12" cy="13" r="5.5" fill="#fff" />
            <path d="M10 9.5 L16 13 L10 16.5 Z" fill="#ee7a1a" />
          </svg>
        </TaskSlot>
        <TaskSlot $on>
          <svg width="28" height="30" viewBox="0 0 64 62" preserveAspectRatio="none">
            <path d="M32 1 L58 16 V46 L32 61 L6 46 V16 Z" fill="#2f6eb5" />
            <path d="M32 1 L58 16 L46 23 L32 15 L18 23 L6 16 Z" fill="#a8c03c" />
            <path d="M6 16 L18 23 V39 L6 46 Z" fill="#952a48" />
            <path d="M6 46 L18 39 L32 47 V61 Z" fill="#d9375c" />
            <path d="M32 15 L46 23 V39 L32 47 L18 39 V23 Z" fill="#f4f4ec" />
          </svg>
        </TaskSlot>
        <TaskSlot $active>
          <svg width="31" height="30" viewBox="0 0 31 30">
            <rect x="1" y="0" width="29" height="30" rx="2" fill="#f2f2f2" />
            <path d="M16 3 C12 8 19 9 15 15 M19 7 C17 10 20 11 18 14" fill="none" stroke="#d8452c" strokeWidth="1.5" />
            <ellipse cx="15" cy="19" rx="6" ry="1.4" fill="none" stroke="#33688f" strokeWidth="1.2" />
            <ellipse cx="15" cy="22" rx="5" ry="1.2" fill="none" stroke="#33688f" strokeWidth="1.2" />
            <ellipse cx="15" cy="25.5" rx="7" ry="1.5" fill="none" stroke="#33688f" strokeWidth="1.2" />
          </svg>
        </TaskSlot>
        <Tray>
          <TrayItem $w={30}><svg width="16" height="9" viewBox="0 0 16 9" fill="none" stroke="#ddd" strokeWidth="1.2"><path d="M.5 8.5 L8 1 L15.5 8.5" /></svg></TrayItem>
          <TrayItem $w={30}>
            <svg width="17" height="16" viewBox="0 0 17 16" fill="none" stroke="#cfcfcf" strokeWidth="1.1"><path d="M1 15 C1 8 7 2 15 1" strokeDasharray="2 1" /><path d="M5 15 C5 10 9 6 15 5" /><path d="M9 15 C9 12 11 10 14 9.5" /><circle cx="14.5" cy="14.5" r="1.3" fill="#fff" stroke="none" /></svg>
          </TrayItem>
          <TrayItem $w={29}>
            <svg width="20" height="19" viewBox="0 0 20 19">
              <rect x=".7" y="3.7" width="16.6" height="9.6" fill="none" stroke="#fff" strokeWidth="1.3" />
              <rect x="2" y="5" width="9" height="7" fill="#fff" />
              <circle cx="14" cy="13.5" r="5.5" fill="#0e8a2c" />
              <path d="M14 10 L16 14 L14 17 L12 14 Z" fill="#dff5e3" />
            </svg>
          </TrayItem>
          <TrayItem $w={30}>
            <svg width="20" height="16" viewBox="0 0 20 16" fill="none" stroke="#cfcfcf" strokeWidth="1"><path d="M1 5.5 H4 L8 1.5 V14.5 L4 10.5 H1 Z" /><path d="M11 5 C12.3 7 12.3 9 11 11" /><path d="M14 3 C16.3 6 16.3 10 14 13" stroke="#777" /><path d="M17 1 C20 5 20 11 17 15" stroke="#555" /></svg>
          </TrayItem>
          <TrayItem $w={47}>ENG</TrayItem>
          <TrayItem $w={81}><Clock>8:52 PM<br />09-Apr-21</Clock></TrayItem>
          <TrayItem $w={58} $pad={2}>
            <svg width="20" height="20" viewBox="0 0 20 20" fill="none" stroke="#fff" strokeWidth="1.2"><path d="M1 1 H19 V16 H13 L10 19 L7 16 H1 Z" /></svg>
          </TrayItem>
          <ShowDesktop />
        </Tray>
      </Taskbar>
    </Screen>
  );
}
